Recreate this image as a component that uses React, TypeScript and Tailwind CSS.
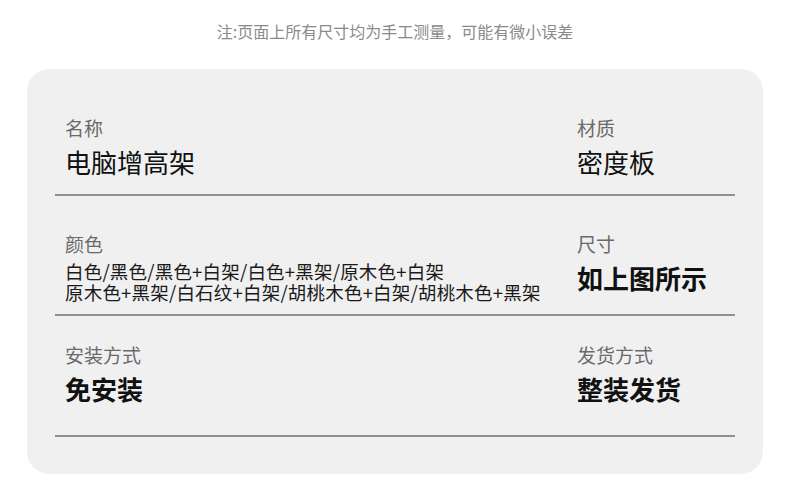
const font = {
  fontFamily: '"Noto Sans CJK SC", "Noto Sans", sans-serif',
};

const Row = ({
  leftLabel,
  leftValue,
  rightLabel,
  rightValue,
  className,
}: {
  leftLabel: string;
  leftValue: React.ReactNode;
  rightLabel: string;
  rightValue: React.ReactNode;
  className: string;
}) => (
  <div className={`flex border-b-2 border-[#919191] pl-[10px] ${className}`}>
    <div className="w-[512px] flex flex-col">
      <div className="text-[19px] leading-[24px] text-[#6a6a6a]">{leftLabel}</div>
      {leftValue}
    </div>
    <div className="flex flex-col">
      <div className="text-[19px] leading-[24px] text-[#6a6a6a]">{rightLabel}</div>
      {rightValue}
    </div>
  </div>
);

export default function App() {
  return (
    <div className="w-[790px] h-[495px] bg-white flex flex-col" style={font}>
      <div className="pt-[19px] text-center text-[16px] leading-[24px] text-[#8a8a8a]">
        注:页面上所有尺寸均为手工测量，可能有微小误差
      </div>
      <div className="ml-[27px] mt-[26px] w-[736px] rounded-[22px] bg-[#f0f0f0] px-[28px] pt-[47px] pb-[37px]">
        <Row
          className="pb-[15px]"
          leftLabel="名称"
          leftValue={
            <div className="mt-[5px] text-[26px] leading-[34px] text-[#111]">电脑增高架</div>
          }
          rightLabel="材质"
          rightValue={
            <div className="mt-[5px] text-[26px] leading-[34px] text-[#111]">密度板</div>
          }
        />
        <Row
          className="pt-[36px] pb-[11px]"
          leftLabel="颜色"
          leftValue={
            <div className="mt-[5px] text-[18.5px] leading-[21px] tracking-[0.2px] text-[#1a1a1a]">
              <div>白色/黑色/黑色+白架/白色+黑架/原木色+白架</div>
              <div>原木色+黑架/白石纹+白架/胡桃木色+白架/胡桃木色+黑架</div>
            </div>
          }
          rightLabel="尺寸"
          rightValue={
            <div className="mt-[5px] text-[26px] leading-[34px] font-bold text-[#111]">如上图所示</div>
          }
        />
        <Row
          className="pt-[27px] pb-[29px]"
          leftLabel="安装方式"
          leftValue={
            <div className="mt-[5px] text-[26px] leading-[34px] font-bold text-[#111]">免安装</div>
          }
          rightLabel="发货方式"
          rightValue={
            <div className="mt-[5px] text-[26px] leading-[34px] font-bold text-[#111]">整装发货</div>
          }
        />
      </div>
    </div>
  );
}
